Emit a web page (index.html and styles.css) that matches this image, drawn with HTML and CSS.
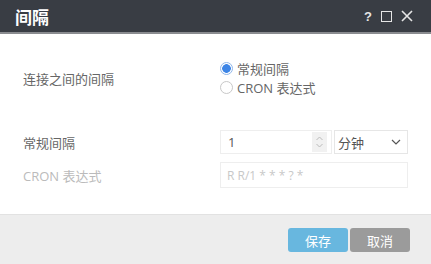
FILE: index.html
```html
<!DOCTYPE html>
<html lang="zh">
<head>
    <meta charset="UTF-8">
    <title>间隔</title>
    <link rel="stylesheet" href="styles.css">
</head>
<body>
    <div class="dialog">
        <div class="dialog-header">
            <span class="dialog-title">间隔</span>
            <div class="dialog-tools">
                <span class="tool-help">?</span>
                <span class="tool-max"></span>
                <svg class="tool-close" width="12" height="12" viewBox="0 0 12 12">
                    <path d="M1 1 L11 11 M11 1 L1 11" stroke="#e6e6e6" stroke-width="1.6" fill="none"/>
                </svg>
            </div>
        </div>

        <div class="dialog-body">
            <div class="form-row row-radio">
                <div class="form-label">连接之间的间隔</div>
                <div class="radio-group">
                    <label class="radio checked"><span class="radio-dot"></span>常规间隔</label>
                    <label class="radio"><span class="radio-dot"></span>CRON 表达式</label>
                </div>
            </div>

            <div class="form-row row-interval">
                <div class="form-label">常规间隔</div>
                <div class="field-group">
                    <div class="number-input">
                        <span class="value">1</span>
                        <span class="spinner">
                            <svg width="9" height="14" viewBox="0 0 9 14">
                                <path d="M1.5 5 L4.5 2 L7.5 5 M1.5 9 L4.5 12 L7.5 9" stroke="#bbb" stroke-width="1" fill="none"/>
                            </svg>
                        </span>
                    </div>
                    <div class="select-input">
                        <span>分钟</span>
                        <svg width="10" height="6" viewBox="0 0 10 6">
                            <path d="M1 1 L5 5 L9 1" stroke="#555" stroke-width="1.2" fill="none"/>
                        </svg>
                    </div>
                </div>
            </div>

            <div class="form-row row-cron">
                <div class="form-label disabled">CRON 表达式</div>
                <div class="text-input disabled">R R/1 * * * ? *</div>
            </div>
        </div>

        <div class="dialog-footer">
            <button class="btn btn-save">保存</button>
            <button class="btn btn-cancel">取消</button>
        </div>
    </div>
</body>
</html>
```

FILE: styles.css
```css
body {
    margin: 0;
    padding: 0;
    width: 431px;
    height: 264px;
    overflow: hidden;
    font-family: "Open Sans", "Noto Sans CJK SC", sans-serif;
    background: #ffffff;
}

.dialog {
    width: 431px;
    height: 264px;
    display: flex;
    flex-direction: column;
}

.dialog-header {
    height: 32px;
    flex-shrink: 0;
    background: #393d44;
    border-bottom: 2px solid #8a8c90;
    display: flex;
    align-items: center;
    justify-content: space-between;
    padding: 0 18px 0 15px;
}

.dialog-title {
    color: #ffffff;
    font-size: 17px;
    font-weight: bold;
    font-family: "Noto Sans CJK SC", sans-serif;
}

.dialog-tools {
    display: flex;
    align-items: center;
    gap: 9px;
    color: #e6e6e6;
}

.tool-help {
    font-family: "Liberation Sans", sans-serif;
    font-weight: bold;
    font-size: 13px;
}

.tool-max {
    width: 9px;
    height: 9px;
    border: 1.5px solid #e6e6e6;
}

.dialog-body {
    flex: 1;
    padding: 0 23px;
}

.form-row {
    display: flex;
    align-items: center;
}

.form-label {
    width: 197px;
    font-size: 13px;
    color: #666666;
}

.form-label.disabled {
    color: #bbbbbb;
}

.row-radio {
    margin-top: 26px;
}

.radio-group {
    display: flex;
    flex-direction: column;
    gap: 2px;
}

.radio {
    display: flex;
    align-items: center;
    font-size: 13px;
    color: #666666;
    height: 17px;
}

.radio-dot {
    width: 13px;
    height: 13px;
    border: 1px solid #c8c8c8;
    border-radius: 50%;
    margin-right: 4px;
    box-sizing: border-box;
    background: #ffffff;
}

.radio.checked .radio-dot {
    border: 1px solid #8fb6ea;
    background: radial-gradient(circle, #3d85e6 0 4px, #ffffff 4.6px);
}

.row-interval {
    margin-top: 34px;
}

.field-group {
    display: flex;
    gap: 2px;
}

.number-input {
    width: 112px;
    height: 24px;
    box-sizing: border-box;
    border: 1px solid #eeeeee;
    display: flex;
    align-items: center;
    justify-content: space-between;
    padding: 0 4px 0 7px;
    font-size: 13px;
    color: #555555;
}

.spinner {
    width: 15px;
    height: 20px;
    background: #f1f1f1;
    display: flex;
    align-items: center;
    justify-content: center;
}

.select-input {
    width: 74px;
    height: 24px;
    box-sizing: border-box;
    border: 1px solid #e6e6e6;
    display: flex;
    align-items: center;
    justify-content: space-between;
    padding: 0 6px 0 3px;
    font-size: 13px;
    color: #555555;
}

.row-cron {
    margin-top: 8px;
}

.text-input {
    width: 188px;
    height: 26px;
    box-sizing: border-box;
    border: 1px solid #eeeeee;
    display: flex;
    align-items: center;
    padding: 0 6px;
    font-size: 12px;
    color: #c8c8c8;
}

.dialog-footer {
    height: 50px;
    flex-shrink: 0;
    box-sizing: border-box;
    background: #ededed;
    border-top: 1px solid #e2e2e2;
    display: flex;
    justify-content: flex-end;
    align-items: flex-start;
    padding: 13px 21px 0 0;
    gap: 2px;
}

.btn {
    width: 60px;
    height: 24px;
    border: none;
    border-radius: 3px;
    color: #ffffff;
    font-size: 13px;
    font-family: "Noto Sans CJK SC", sans-serif;
    padding: 0;
}

.btn-save {
    background: #68b7df;
}

.btn-cancel {
    background: #9b9b9b;
}
```
